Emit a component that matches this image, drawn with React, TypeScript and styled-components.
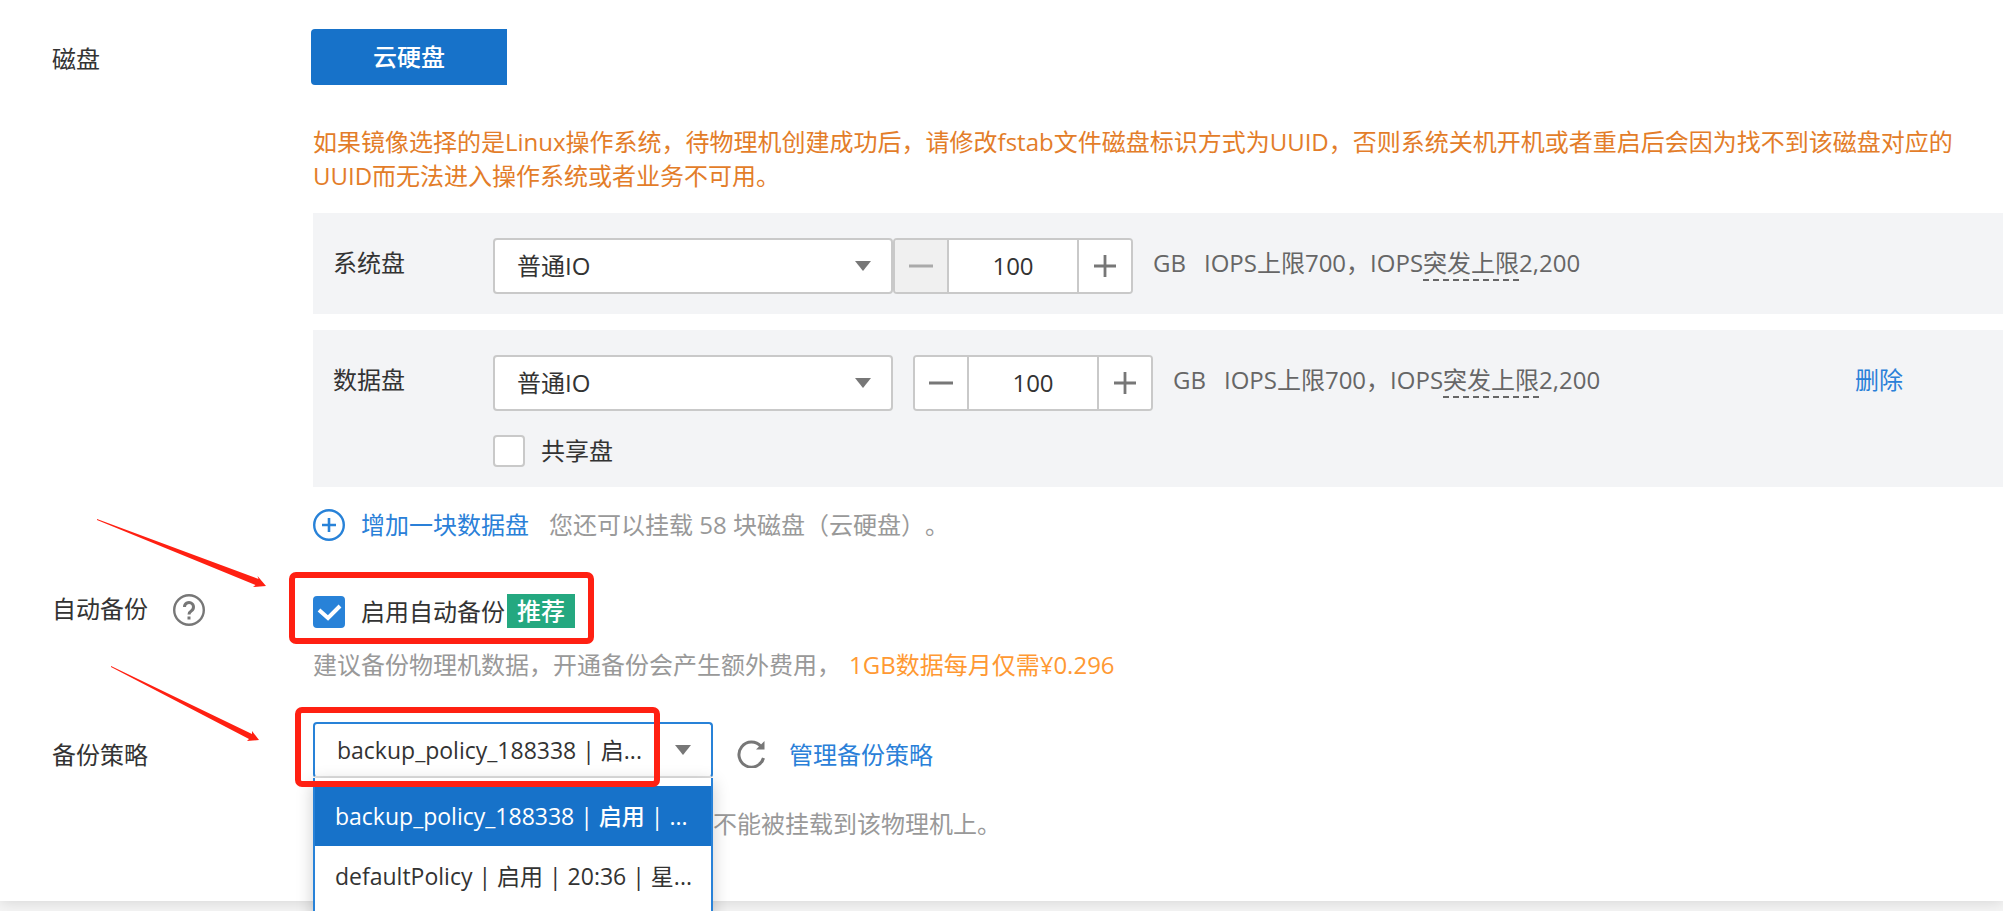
import React, { useState } from "react";
import styled, { createGlobalStyle } from "styled-components";

const color = {
  text: "#333",
  muted: "#999",
  detail: "#666",
  icon: "#777",
  link: "#2a80d8",
  primary: "#1772c9",
  focus: "#2882d8",
  border: "#c9c9c9",
  panel: "#f3f4f6",
  warning: "#e37d29",
  price: "#ff9933",
  badge: "#24a880",
  mark: "#ff2012",
};

const GlobalStyle = createGlobalStyle`
  *, *::before, *::after { box-sizing: border-box; }
  body {
    margin: 0;
    background: #f5f5f5;
    color: ${color.text};
    font-family: "Open Sans", "Noto Sans CJK SC", sans-serif;
    font-size: 24px;
    line-height: 34px;
    text-spacing-trim: space-all;
  }
  button, input, select { font: inherit; color: inherit; margin: 0; }
  p { margin: 0; }
`;

const Page = styled.div`
  min-height: 100vh;
  overflow: hidden;
`;

const Card = styled.main`
  background: #fff;
  padding: 29px 0 60px 52px;
  box-shadow: 0 2px 14px rgba(0, 0, 0, 0.12);
`;

const FormRow = styled.section<{ $gap?: number }>`
  display: grid;
  grid-template-columns: 261px minmax(0, 1fr);
  margin-top: ${(p) => p.$gap ?? 0}px;
`;

const RowLabel = styled.div<{ $top?: number }>`
  position: relative;
  display: flex;
  align-items: flex-start;
  gap: 25px;
  padding-top: ${(p) => p.$top ?? 0}px;
`;

const TypeButton = styled.button`
  width: 196px;
  height: 56px;
  margin-left: -2px;
  padding: 0;
  border: 0;
  border-radius: 4px 0 0 4px;
  background: ${color.primary};
  color: #fff;
  font-weight: 500;
`;

const Warning = styled.p`
  margin: 40px 40px 20px 0;
  color: ${color.warning};
`;

const DiskPanel = styled.div`
  background: ${color.panel};
  padding: 25px 100px 20px 20px;
  & + & {
    margin-top: 16px;
  }
`;

const DiskLine = styled.div`
  display: flex;
  align-items: flex-start;
`;

const DiskName = styled.label`
  width: 160px;
  padding-top: 8px;
`;

const SelectWrap = styled.div`
  position: relative;
  width: 400px;
  height: 56px;
  flex: none;
`;

const Select = styled.select<{ $open?: boolean }>`
  appearance: none;
  width: 100%;
  height: 56px;
  padding: 0 60px 0 22px;
  border: 2px solid ${(p) => (p.$open ? color.focus : color.border)};
  border-bottom-color: ${(p) => (p.$open ? "#e0e0e0" : color.border)};
  border-radius: 4px;
  background: #fff;
  outline: none;
  font-size: ${(p) => (p.$open ? 23 : 24)}px;
`;

const Caret = styled.svg`
  position: absolute;
  top: 23px;
  right: 22px;
  pointer-events: none;
`;

const Stepper = styled.div<{ $gap: number }>`
  display: flex;
  flex: none;
  width: 240px;
  height: 56px;
  margin: 0 20px 0 ${(p) => p.$gap}px;
  border: 2px solid ${color.border};
  border-radius: 4px;
  background: #fff;
  overflow: hidden;
`;

const StepButton = styled.button`
  display: grid;
  place-items: center;
  width: 52px;
  padding: 0;
  border: 0;
  background: #fff;
  color: ${color.icon};
  &:disabled {
    background: #f0f0f0;
    color: #aaa;
  }
`;

const StepInput = styled.input`
  flex: 1;
  min-width: 0;
  padding: 0;
  border: solid ${color.border};
  border-width: 0 2px;
  text-align: center;
  outline: none;
`;

const Spec = styled.div`
  display: flex;
  gap: 18px;
  padding-top: 8px;
  color: ${color.detail};
`;

const Dashed = styled.span`
  border-bottom: 2px dashed ${color.detail};
`;

const Link = styled.a`
  color: ${color.link};
  text-decoration: none;
`;

const DeleteLink = styled(Link)`
  margin-left: auto;
  padding-top: 8px;
`;

const ShareLine = styled.div`
  display: flex;
  margin: 24px 0 0 160px;
`;

const CheckLabel = styled.label`
  display: inline-flex;
  align-items: center;
  gap: 16px;
  height: 32px;
`;

const CheckBox = styled.span`
  position: relative;
  width: 32px;
  height: 32px;
  flex: none;
  svg {
    position: absolute;
    inset: 0;
    pointer-events: none;
  }
`;

const CheckInput = styled.input`
  appearance: none;
  display: block;
  width: 32px;
  height: 32px;
  border: 2px solid ${color.border};
  border-radius: 4px;
  background: #fff;
  &:checked {
    border-color: ${color.focus};
    background: ${color.focus};
  }
`;

const AddLine = styled.div`
  display: flex;
  align-items: center;
  height: 32px;
  margin-top: 22px;
  gap: 20px;
`;

const AddLink = styled(Link)`
  display: flex;
  align-items: center;
  gap: 16px;
`;

const Muted = styled.span`
  color: ${color.muted};
`;

const HelpButton = styled.button`
  display: block;
  width: 32px;
  height: 32px;
  margin-top: 2px;
  padding: 0;
  border: 0;
  background: none;
  color: ${color.icon};
`;

const BackupRow = styled.div`
  display: flex;
`;

const BackupLine = styled.div`
  position: relative;
  display: flex;
  align-items: flex-end;
  gap: 2px;
  height: 36px;
`;

const Badge = styled.span`
  height: 34px;
  padding: 0 10px;
  background: ${color.badge};
  color: #fff;
  font-weight: 500;
`;

const Hint = styled.p<{ $top: number }>`
  margin-top: ${(p) => p.$top}px;
  color: ${color.muted};
`;

const Price = styled.span`
  margin-left: 8px;
  color: ${color.price};
`;

const PolicyLine = styled.div`
  display: flex;
  align-items: flex-start;
  gap: 24px;
`;

const RefreshButton = styled.button`
  width: 28px;
  height: 28px;
  margin-top: 18px;
  padding: 0;
  border: 0;
  background: none;
  svg {
    display: block;
  }
`;

const PolicyLink = styled(Link)`
  padding-top: 16px;
`;

const Menu = styled.ul`
  position: absolute;
  top: 56px;
  left: 0;
  z-index: 2;
  width: 100%;
  height: 200px;
  margin: 0;
  padding: 8px 0 0;
  list-style: none;
  font-size: 23px;
  background: #fff;
  border: solid ${color.focus};
  border-width: 0 2px 2px;
  box-shadow: 0 4px 16px rgba(0, 0, 0, 0.2);
`;

const MenuItem = styled.li<{ $active?: boolean }>`
  padding: 13px 20px;
  white-space: nowrap;
  background: ${(p) => (p.$active ? color.primary : "#fff")};
  color: ${(p) => (p.$active ? "#fff" : color.text)};
  font-weight: ${(p) => (p.$active ? 500 : 400)};
`;

const Mark = styled.div<{ $inset: string }>`
  position: absolute;
  inset: ${(p) => p.$inset};
  z-index: 3;
  border: 6px solid ${color.mark};
  border-radius: 7px;
  pointer-events: none;
`;

const Arrow = styled.svg<{ $left: number; $top: number }>`
  position: absolute;
  left: ${(p) => p.$left}px;
  top: ${(p) => p.$top}px;
  fill: ${color.mark};
  pointer-events: none;
`;

const HiddenHint = styled.p`
  margin: 29px 0 0 400px;
  color: ${color.muted};
`;

function DropCaret() {
  return (
    <Caret width="16" height="10" viewBox="0 0 16 10" aria-hidden>
      <path d="M0 0h16L8 10z" fill={color.icon} />
    </Caret>
  );
}

function SizeStepper({ gap, locked, label }: { gap: number; locked?: boolean; label: string }) {
  const [size, setSize] = useState(100);
  return (
    <Stepper $gap={gap}>
      <StepButton type="button" disabled={locked} aria-label="减少" onClick={() => setSize(size - 10)}>
        <svg width="24" height="24" viewBox="0 0 24 24" aria-hidden>
          <path d="M0 12h24" stroke="currentColor" strokeWidth="3" />
        </svg>
      </StepButton>
      <StepInput aria-label={label} value={size} onChange={(e) => setSize(Number(e.target.value) || 0)} />
      <StepButton type="button" aria-label="增加" onClick={() => setSize(size + 10)}>
        <svg width="24" height="24" viewBox="0 0 24 24" aria-hidden>
          <path d="M1 12h22M12 1v22" stroke="currentColor" strokeWidth="2.8" />
        </svg>
      </StepButton>
    </Stepper>
  );
}

function DiskSettings({ id, name, gap, locked }: { id: string; name: string; gap: number; locked?: boolean }) {
  return (
    <>
      <DiskName htmlFor={id}>{name}</DiskName>
      <SelectWrap>
        <Select id={id}>
          <option>普通IO</option>
        </Select>
        <DropCaret />
      </SelectWrap>
      <SizeStepper gap={gap} locked={locked} label={name + "容量"} />
      <Spec>
        <span>GB</span>
        <span>
          IOPS上限700，IOPS<Dashed>突发上限</Dashed>2,200
        </span>
      </Spec>
    </>
  );
}

export default function App() {
  const [shared, setShared] = useState(false);
  const [backup, setBackup] = useState(true);

  return (
    <Page lang="zh-CN">
      <GlobalStyle />
      <Card>
        <FormRow>
          <RowLabel $top={13}>磁盘</RowLabel>
          <div>
            <TypeButton type="button">云硬盘</TypeButton>
            <Warning>
              如果镜像选择的是Linux操作系统，待物理机创建成功后，请修改fstab文件磁盘标识方式为UUID，否则系统关机开机或者重启后会因为找不到该磁盘对应的UUID而无法进入操作系统或者业务不可用。
            </Warning>
            <DiskPanel>
              <DiskLine>
                <DiskSettings id="system-disk" name="系统盘" gap={0} locked />
              </DiskLine>
            </DiskPanel>
            <DiskPanel>
              <DiskLine>
                <DiskSettings id="data-disk" name="数据盘" gap={20} />
                <DeleteLink href="#delete">删除</DeleteLink>
              </DiskLine>
              <ShareLine>
                <CheckLabel>
                  <CheckBox>
                    <CheckInput type="checkbox" checked={shared} onChange={(e) => setShared(e.target.checked)} />
                  </CheckBox>
                  共享盘
                </CheckLabel>
              </ShareLine>
            </DiskPanel>
            <AddLine>
              <AddLink href="#add">
                <svg width="32" height="32" viewBox="0 0 32 32" fill="none" stroke={color.focus} aria-hidden>
                  <circle cx="16" cy="16" r="14.8" strokeWidth="2.4" />
                  <path d="M9 16h14M16 9v14" strokeWidth="2.6" />
                </svg>
                增加一块数据盘
              </AddLink>
              <Muted>您还可以挂载 58 块磁盘（云硬盘）。</Muted>
            </AddLine>
          </div>
        </FormRow>

        <FormRow $gap={51}>
          <RowLabel>
            自动备份
            <HelpButton type="button" aria-label="帮助">
              <svg width="32" height="32" viewBox="0 0 32 32" fill="none" stroke="currentColor" aria-hidden>
                <circle cx="16" cy="16" r="14.8" strokeWidth="2.4" />
                <path d="M11.5 13a4.5 4.5 0 1 1 7 3.7c-1.7 1.1-2.5 2-2.5 3.8" strokeWidth="3" />
                <path d="M16 22.5v3" strokeWidth="3" />
              </svg>
            </HelpButton>
            <Arrow $left={45} $top={-73} width="170" height="70" viewBox="0 0 170 70" aria-hidden>
              <path d="M0 0L161.5 60L160.5 57L169 67L156 68L158.5 66L0 1Z" />
            </Arrow>
          </RowLabel>
          <div>
            <BackupRow>
              <BackupLine>
                <CheckLabel>
                  <CheckBox>
                    <CheckInput type="checkbox" checked={backup} onChange={(e) => setBackup(e.target.checked)} />
                    {backup && (
                      <svg width="32" height="32" viewBox="0 0 32 32" aria-hidden>
                        <path d="M6 14l9 8L27 10" fill="none" stroke="#fff" strokeWidth="4" />
                      </svg>
                    )}
                  </CheckBox>
                  启用自动备份
                </CheckLabel>
                <Badge>推荐</Badge>
                <Mark $inset="-20px -19px -16px -24px" />
              </BackupLine>
            </BackupRow>
            <Hint $top={20}>
              建议备份物理机数据，开通备份会产生额外费用，
              <Price>1GB数据每月仅需¥0.296</Price>
            </Hint>
          </div>
        </FormRow>

        <FormRow $gap={40}>
          <RowLabel $top={16}>
            <label htmlFor="policy">备份策略</label>
            <Arrow $left={59} $top={-56} width="150" height="76" viewBox="0 0 150 76" aria-hidden>
              <path d="M0 0L141 68L141 65L148 74L136 75L138 73L0 1Z" />
            </Arrow>
          </RowLabel>
          <div>
            <PolicyLine>
              <SelectWrap>
                <Select id="policy" $open>
                  <option>backup_policy_188338 | 启...</option>
                </Select>
                <DropCaret />
                <Menu role="listbox" aria-label="备份策略">
                  <MenuItem role="option" aria-selected $active>
                    backup_policy_188338 | 启用 | ...
                  </MenuItem>
                  <MenuItem role="option" aria-selected={false}>
                    defaultPolicy | 启用 | 20:36 | 星...
                  </MenuItem>
                </Menu>
                <Mark $inset="-15px 53px -9px -18px" />
              </SelectWrap>
              <RefreshButton type="button" aria-label="刷新">
                <svg width="28" height="28" viewBox="0 0 28 28" aria-hidden>
                  <path d="M24 6.5A12.5 12.5 0 1 0 26.5 18" fill="none" stroke={color.icon} strokeWidth="3" />
                  <path d="M27.5 1v8.5H19z" fill={color.icon} />
                </svg>
              </RefreshButton>
              <PolicyLink href="#policies">管理备份策略</PolicyLink>
            </PolicyLine>
            <HiddenHint>不能被挂载到该物理机上。</HiddenHint>
          </div>
        </FormRow>
      </Card>
    </Page>
  );
}
